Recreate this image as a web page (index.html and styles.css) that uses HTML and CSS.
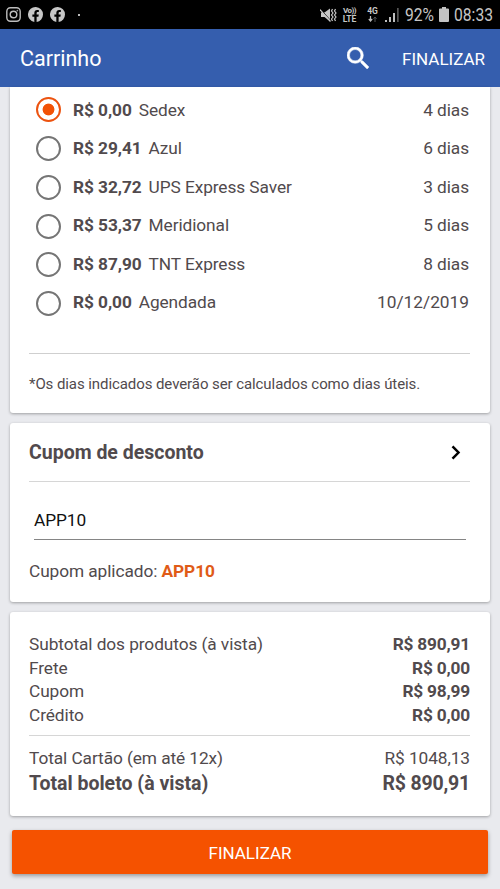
FILE: index.html
```html
<!DOCTYPE html>
<html lang="pt-BR">
<head>
<meta charset="utf-8">
<title>Carrinho</title>
<link rel="stylesheet" href="styles.css">
</head>
<body>
<div class="status">
  <svg class="insta" width="15" height="15" viewBox="0 0 15 15" fill="none" stroke="#bdbdbd"><rect x=".8" y=".8" width="13.4" height="13.4" rx="3.6" stroke-width="1.4"/><circle cx="7.5" cy="7.5" r="3.3" stroke-width="1.4"/><circle cx="11.3" cy="3.7" r=".4"/></svg>
  <svg class="fb" width="15" height="15" viewBox="0 0 24 24" fill="#c6c6c6"><path d="M24 12A12 12 0 1 0 10.1 23.9V15.5H7V12h3.100V9.400c0-3 1.800-4.700 4.500-4.700 1.300 0 2.700.2 2.700.2v3h-1.500c-1.500 0-2 .9-2 1.900V12h3.400l-.5 3.500h-2.900v8.400A12 12 0 0 0 24 12Z"/></svg>
  <svg class="fb" width="15" height="15" viewBox="0 0 24 24" fill="#c6c6c6"><path d="M24 12A12 12 0 1 0 10.1 23.9V15.5H7V12h3.100V9.400c0-3 1.800-4.700 4.500-4.700 1.300 0 2.700.2 2.700.2v3h-1.500c-1.500 0-2 .9-2 1.900V12h3.400l-.5 3.500h-2.900v8.400A12 12 0 0 0 24 12Z"/></svg>
  <span class="dot"></span>
  <svg class="mute" width="17" height="16" viewBox="0 0 17 16" fill="none" stroke="#c6c6c6"><path d="M1 5.500h3.500L10 1.500v13L4.500 10H1z" fill="#c6c6c6" stroke="none"/><path d="M0 1.500 11 14" stroke="#000" stroke-width="1"/><path d="M0 2.600 10.500 14.500" stroke-width="1.200"/><path d="m12.500 2-1 2 1.500 2-1.500 2 1.500 2-1.500 2 1 2M15.500 2l-1 2 1.500 2-1.500 2 1.500 2-1.500 2 1 2" stroke-width="1.200"/></svg>
  <span class="tiny volte"><span class="vo">Vo))</span><span>LTE</span></span>
  <span class="tiny net"><span>4G</span><svg width="9" height="6" viewBox="0 0 9 6"><path d="M2.500 0v5M.8 3l1.700 2 1.700-2" fill="none" stroke="#bbb" stroke-width="1.200"/><path d="M7 6V1M5.500 2.800 7 1l1.500 1.800" fill="none" stroke="#555"/></svg></span>
  <svg class="signal" width="14" height="14" viewBox="0 0 14 14"><path d="M0 12h2v2H0zM4 9h2v5H4zM8 5h2v9H8z" fill="#bdbdbd"/><path d="M12 0h1.700v14H12z" fill="#555"/></svg>
  <span class="pct">92%</span>
  <svg class="batt" width="10" height="15" viewBox="0 0 10 15" fill="#c4c4c4"><path d="M3 0h4v1.500h2a1 1 0 0 1 1 1V14a1 1 0 0 1-1 1H1a1 1 0 0 1-1-1V2.500a1 1 0 0 1 1-1h2z"/></svg>
  <span class="clock">08:33</span>
</div>
<header class="bar">
  <h1 class="title">Carrinho</h1>
  <svg class="search" width="22" height="22" viewBox="3 3 17.500 17.500" fill="#fff" stroke="#fff" stroke-width=".4"><path d="M15.500 14h-.79l-.28-.27A6.471 6.471 0 0 0 16 9.500 6.500 6.500 0 1 0 9.500 16c1.610 0 3.090-.59 4.230-1.570l.27.28v.79l5 4.990L20.490 19l-4.990-5zm-6 0C7.010 14 5 11.990 5 9.500S7.010 5 9.500 5 14 7.010 14 9.500 11.990 14 9.500 14z"/></svg>
  <span class="action">FINALIZAR</span>
</header>
<main>
  <section class="card shipping">
    <div class="options">
      <div class="radios"><i class="radio on"></i><i class="radio"></i><i class="radio"></i><i class="radio"></i><i class="radio"></i><i class="radio"></i></div>
      <div class="labels">
        <div class="row"><span><b>R$ 0,00</b>Sedex</span><span>4 dias</span></div>
        <div class="row"><span><b>R$ 29,41</b>Azul</span><span>6 dias</span></div>
        <div class="row"><span><b>R$ 32,72</b>UPS Express Saver</span><span>3 dias</span></div>
        <div class="row"><span><b>R$ 53,37</b>Meridional</span><span>5 dias</span></div>
        <div class="row"><span><b>R$ 87,90</b>TNT Express</span><span>8 dias</span></div>
        <div class="row"><span><b>R$ 0,00</b>Agendada</span><span class="date">10/12/2019</span></div>
      </div>
    </div>
    <p class="note"><span>*Os dias indicados deverão ser calculados como dias úteis.</span></p>
  </section>
  <section class="card coupon">
    <div class="head"><h2>Cupom de desconto</h2><svg width="10" height="15" viewBox="0 0 10 15"><path d="m1.500 1.300 6 6.200-6 6.200" fill="none" stroke="#000" stroke-width="2.500"/></svg></div>
    <div class="field">APP10</div>
    <p class="applied">Cupom aplicado: <b>APP10</b></p>
  </section>
  <section class="card totals">
    <div class="sum"><span>Subtotal dos produtos (à vista)</span><b>R$ 890,91</b></div>
    <div class="sum"><span>Frete</span><b>R$ 0,00</b></div>
    <div class="sum"><span>Cupom</span><b>R$ 98,99</b></div>
    <div class="sum"><span>Crédito</span><b>R$ 0,00</b></div>
    <div class="sum card-total"><span>Total Cartão (em até 12x)</span><span>R$ 1048,13</span></div>
    <div class="sum grand"><b>Total boleto (à vista)</b><b>R$ 890,91</b></div>
  </section>
  <button class="cta">FINALIZAR</button>
</main>
</body>
</html>
```
FILE: styles.css
```css
* { box-sizing: border-box; }
body {
  margin: 0;
  height: 889px;
  overflow: hidden;
  background: #e9eaee;
  color: #514a4d;
  font: 17.3px/24px Roboto, sans-serif;
  letter-spacing: -.08px;
}
h1, h2, p { margin: 0; }
b { font-weight: 700; }

.status {
  display: flex;
  align-items: center;
  height: 29px;
  padding: 0 7px 0 6px;
  background: #000;
  color: #c6c6c6;
}
.fb { margin-left: 7px; }
.dot { width: 2px; height: 2px; margin-left: 13px; background: #bbb; }
.mute { margin-left: auto; }
.tiny {
  display: flex;
  flex-direction: column;
  align-items: center;
  font-size: 8.500px;
  line-height: 9px;
  font-weight: 700;
}
.volte { margin-left: 5px; width: 15px; }
.vo { font-size: 8px; letter-spacing: -.5px; }
.net { margin-left: 9px; width: 13px; }
.signal { margin: 1px 0 0 6px; }
.pct, .clock { font-size: 18px; letter-spacing: 0; white-space: nowrap; transform: scaleX(.87); transform-origin: left; }
.pct { width: 28px; margin-left: 6px; }
.clock { width: 39px; margin-left: 5px; }
.batt { margin-left: 6px; }

.bar {
  display: flex;
  align-items: center;
  height: 58px;
  padding: 2px 15px 0 20px;
  background: #355eae;
  color: #fff;
}
.title { font-size: 21.5px; font-weight: 400; letter-spacing: 0; }
.search { margin: -3px 33px 0 auto; }
.action { width: 83px; font-size: 17px; letter-spacing: 0; white-space: nowrap; }

main { display: flex; flex-direction: column; gap: 10px; padding: 0 10px; }
.card {
  padding: 0 20px 0 19px;
  background: #fff;
  border-radius: 3px;
  box-shadow: 0 1px 3px rgba(0, 0, 0, .32);
}
.shipping { height: 326px; border-radius: 0 0 3px 3px; }
.options { display: flex; gap: 12px; height: 267px; padding: 10px 1px 0 7px; border-bottom: 1px solid #cfcfcf; }
.radios { display: flex; flex-direction: column; gap: 13.850px; }
.radio { width: 25px; height: 25px; border: 2px solid #757575; border-radius: 50%; }
.on { border-color: #ec5310; background: radial-gradient(circle, #f25206 5.500px, #fff 6.300px); }
.labels { flex: 1; padding-top: 1px; }
.row { display: flex; justify-content: space-between; height: 38.400px; }
.row b { margin-right: 7px; }
.date { letter-spacing: 0; }
.note { padding-top: 18px; font-size: 15px; }

.coupon { height: 179px; }
.head {
  display: flex;
  align-items: center;
  justify-content: space-between;
  height: 59px;
  padding-right: 9px;
  border-bottom: 1px solid #d6d6d6;
}
.head h2 { font-size: 19.5px; padding-top: 2px; letter-spacing: 0; }
.field {
  height: 58px;
  margin: 0 4px 0 5px;
  padding-top: 26px;
  border-bottom: 1px solid #858585;
  color: #111;
}
.applied { padding-top: 19px; }
.applied b { color: #e05b17; }

.totals { height: 204px; padding-top: 20px; }
.sum { display: flex; justify-content: space-between; height: 23.700px; }
.sum b:last-child { letter-spacing: -.2px; }
.card-total { height: 36px; margin-top: 8.500px; padding-top: 10px; border-top: 1px solid #d6d6d6; }
.grand { font-size: 19.5px; letter-spacing: 0; padding-top: 1px; }

.cta {
  height: 44px;
  margin: 4px 2px 0;
  padding-top: 3px;
  border: 0;
  border-radius: 2px;
  background: #f55200;
  color: #fff;
  font: 17px Roboto, sans-serif;
  box-shadow: 0 2px 4px rgba(0, 0, 0, .35);
}
```
